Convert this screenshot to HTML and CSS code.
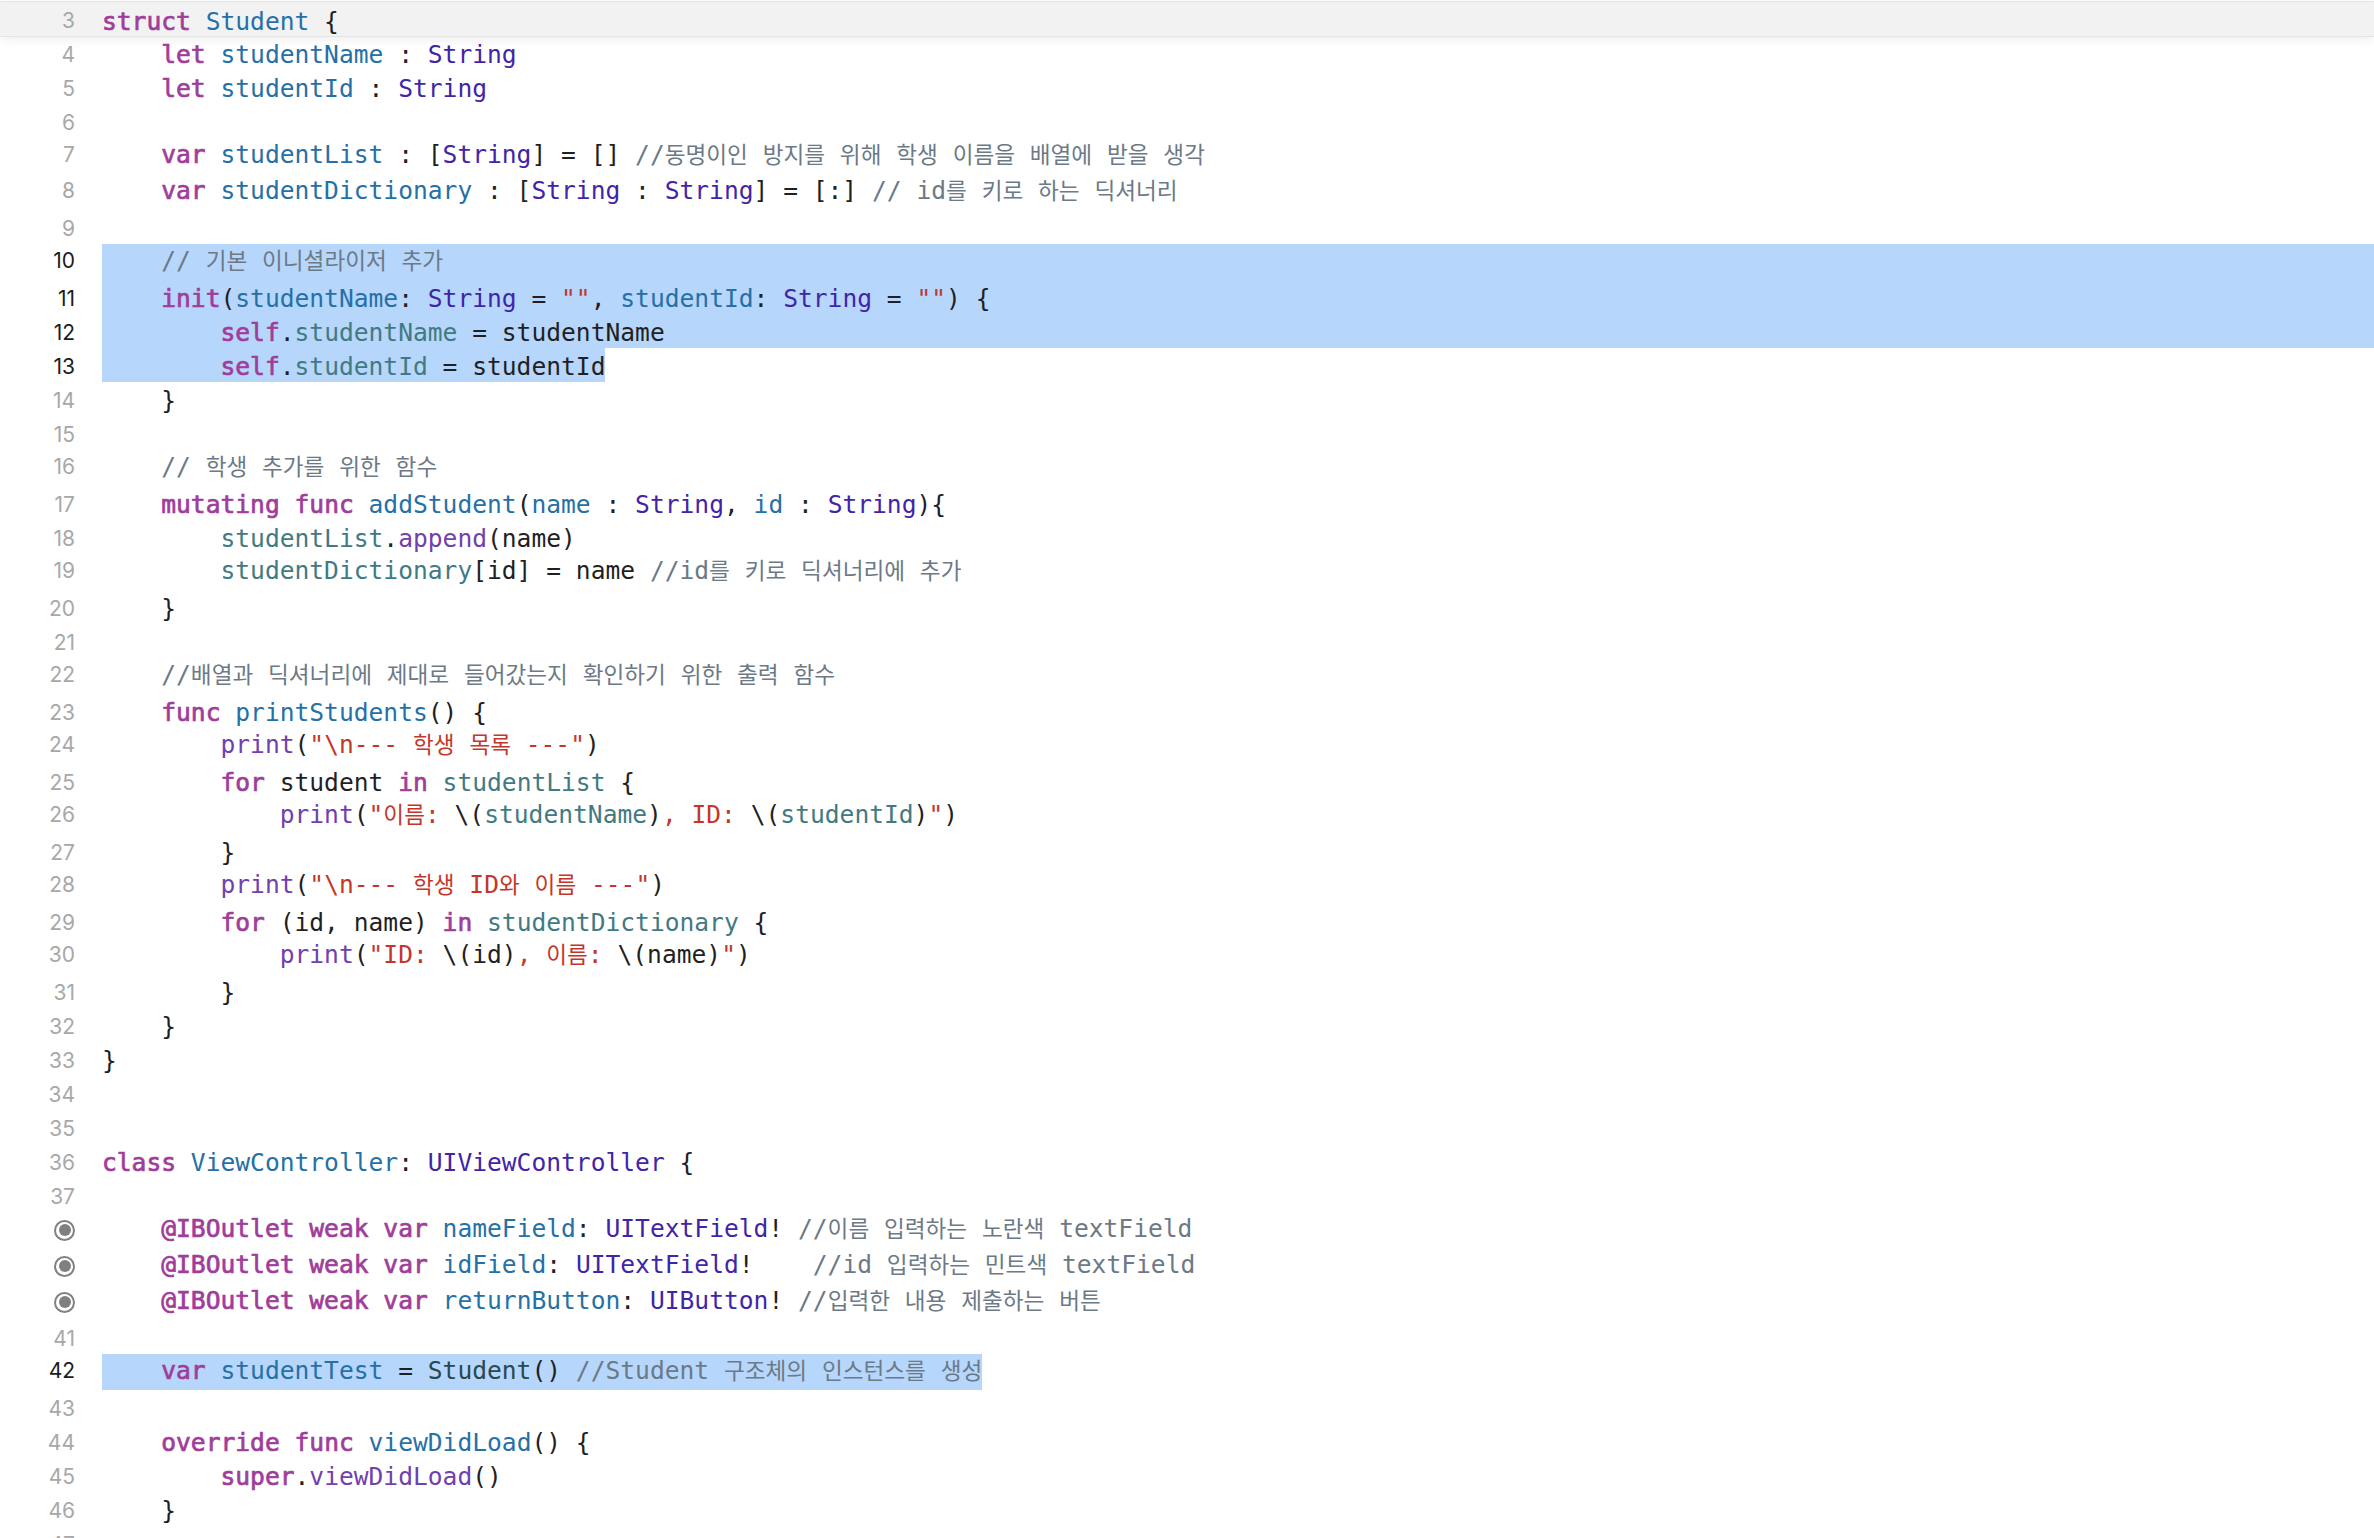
FILE: index.html
```html
<!DOCTYPE html>
<html lang="ko">
<head>
  <meta charset="UTF-8">
  <title>ViewController.swift</title>
  <link rel="stylesheet" href="styles.css">
</head>
<body>

<div class="editor">
  <div class="row sticky"><span class="num">3</span><code class="code"><b class="k">struct</b> <i class="d">Student</i> {</code></div>
  <div class="row"><span class="num">4</span><code class="code">    <b class="k">let</b> <i class="d">studentName</i> : <i class="s">String</i></code></div>
  <div class="row"><span class="num">5</span><code class="code">    <b class="k">let</b> <i class="d">studentId</i> : <i class="s">String</i></code></div>
  <div class="row"><span class="num">6</span><code class="code"></code></div>
  <div class="row tall"><span class="num">7</span><code class="code">    <b class="k">var</b> <i class="d">studentList</i> : [<i class="s">String</i>] = [] <i class="c">//<span class="ko">동명이인</span> <span class="ko">방지를</span> <span class="ko">위해</span> <span class="ko">학생</span> <span class="ko">이름을</span> <span class="ko">배열에</span> <span class="ko">받을</span> <span class="ko">생각</span></i></code></div>
  <div class="row tall"><span class="num">8</span><code class="code">    <b class="k">var</b> <i class="d">studentDictionary</i> : [<i class="s">String</i> : <i class="s">String</i>] = [:] <i class="c">// id<span class="ko">를</span> <span class="ko">키로</span> <span class="ko">하는</span> <span class="ko">딕셔너리</span></i></code></div>
  <div class="row"><span class="num">9</span><code class="code"></code></div>
  <div class="row tall cur"><span class="num">10</span><code class="code sel">    <i class="c">// <span class="ko">기본</span> <span class="ko">이니셜라이저</span> <span class="ko">추가</span></i></code></div>
  <div class="row cur"><span class="num">11</span><code class="code sel">    <b class="k">init</b>(<i class="d">studentName</i>: <i class="s">String</i> = <i class="r">""</i>, <i class="d">studentId</i>: <i class="s">String</i> = <i class="r">""</i>) {</code></div>
  <div class="row cur"><span class="num">12</span><code class="code sel">        <b class="k">self</b>.<i class="p">studentName</i> = studentName</code></div>
  <div class="row cur"><span class="num">13</span><code class="code sel part">        <b class="k">self</b>.<i class="p">studentId</i> = studentId</code></div>
  <div class="row"><span class="num">14</span><code class="code">    }</code></div>
  <div class="row"><span class="num">15</span><code class="code"></code></div>
  <div class="row tall"><span class="num">16</span><code class="code">    <i class="c">// <span class="ko">학생</span> <span class="ko">추가를</span> <span class="ko">위한</span> <span class="ko">함수</span></i></code></div>
  <div class="row"><span class="num">17</span><code class="code">    <b class="k">mutating</b> <b class="k">func</b> <i class="d">addStudent</i>(<i class="d">name</i> : <i class="s">String</i>, <i class="d">id</i> : <i class="s">String</i>){</code></div>
  <div class="row"><span class="num">18</span><code class="code">        <i class="p">studentList</i>.<i class="m">append</i>(name)</code></div>
  <div class="row tall"><span class="num">19</span><code class="code">        <i class="p">studentDictionary</i>[id] = name <i class="c">//id<span class="ko">를</span> <span class="ko">키로</span> <span class="ko">딕셔너리에</span> <span class="ko">추가</span></i></code></div>
  <div class="row"><span class="num">20</span><code class="code">    }</code></div>
  <div class="row"><span class="num">21</span><code class="code"></code></div>
  <div class="row tall"><span class="num">22</span><code class="code">    <i class="c">//<span class="ko">배열과</span> <span class="ko">딕셔너리에</span> <span class="ko">제대로</span> <span class="ko">들어갔는지</span> <span class="ko">확인하기</span> <span class="ko">위한</span> <span class="ko">출력</span> <span class="ko">함수</span></i></code></div>
  <div class="row"><span class="num">23</span><code class="code">    <b class="k">func</b> <i class="d">printStudents</i>() {</code></div>
  <div class="row tall"><span class="num">24</span><code class="code">        <i class="m">print</i>(<i class="r">"\n--- <span class="ko">학생</span> <span class="ko">목록</span> ---"</i>)</code></div>
  <div class="row"><span class="num">25</span><code class="code">        <b class="k">for</b> student <b class="k">in</b> <i class="p">studentList</i> {</code></div>
  <div class="row tall"><span class="num">26</span><code class="code">            <i class="m">print</i>(<i class="r">"<span class="ko">이름</span>: </i>\(<i class="p">studentName</i>)<i class="r">, ID: </i>\(<i class="p">studentId</i>)<i class="r">"</i>)</code></div>
  <div class="row"><span class="num">27</span><code class="code">        }</code></div>
  <div class="row tall"><span class="num">28</span><code class="code">        <i class="m">print</i>(<i class="r">"\n--- <span class="ko">학생</span> ID<span class="ko">와</span> <span class="ko">이름</span> ---"</i>)</code></div>
  <div class="row"><span class="num">29</span><code class="code">        <b class="k">for</b> (id, name) <b class="k">in</b> <i class="p">studentDictionary</i> {</code></div>
  <div class="row tall"><span class="num">30</span><code class="code">            <i class="m">print</i>(<i class="r">"ID: </i>\(id)<i class="r">, <span class="ko">이름</span>: </i>\(name)<i class="r">"</i>)</code></div>
  <div class="row"><span class="num">31</span><code class="code">        }</code></div>
  <div class="row"><span class="num">32</span><code class="code">    }</code></div>
  <div class="row"><span class="num">33</span><code class="code">}</code></div>
  <div class="row"><span class="num">34</span><code class="code"></code></div>
  <div class="row"><span class="num">35</span><code class="code"></code></div>
  <div class="row"><span class="num">36</span><code class="code"><b class="k">class</b> <i class="d">ViewController</i>: <i class="s">UIViewController</i> {</code></div>
  <div class="row"><span class="num">37</span><code class="code"></code></div>
  <div class="row tall"><span class="num"><span class="outlet"></span></span><code class="code">    <b class="k">@IBOutlet</b> <b class="k">weak</b> <b class="k">var</b> <i class="d">nameField</i>: <i class="s">UITextField</i>! <i class="c">//<span class="ko">이름</span> <span class="ko">입력하는</span> <span class="ko">노란색</span> textField</i></code></div>
  <div class="row tall"><span class="num"><span class="outlet"></span></span><code class="code">    <b class="k">@IBOutlet</b> <b class="k">weak</b> <b class="k">var</b> <i class="d">idField</i>: <i class="s">UITextField</i>!    <i class="c">//id <span class="ko">입력하는</span> <span class="ko">민트색</span> textField</i></code></div>
  <div class="row tall"><span class="num"><span class="outlet"></span></span><code class="code">    <b class="k">@IBOutlet</b> <b class="k">weak</b> <b class="k">var</b> <i class="d">returnButton</i>: <i class="s">UIButton</i>! <i class="c">//<span class="ko">입력한</span> <span class="ko">내용</span> <span class="ko">제출하는</span> <span class="ko">버튼</span></i></code></div>
  <div class="row"><span class="num">41</span><code class="code"></code></div>
  <div class="row tall cur"><span class="num">42</span><code class="code sel part">    <b class="k">var</b> <i class="d">studentTest</i> = <i class="t">Student</i>() <i class="c">//Student <span class="ko">구조체의</span> <span class="ko">인스턴스를</span> <span class="ko">생성</span></i></code></div>
  <div class="row"><span class="num">43</span><code class="code"></code></div>
  <div class="row"><span class="num">44</span><code class="code">    <b class="k">override</b> <b class="k">func</b> <i class="d">viewDidLoad</i>() {</code></div>
  <div class="row"><span class="num">45</span><code class="code">        <b class="k">super</b>.<i class="m">viewDidLoad</i>()</code></div>
  <div class="row"><span class="num">46</span><code class="code">    }</code></div>
  <div class="row"><span class="num">47</span><code class="code"></code></div>
</div>

</body>
</html>
```
FILE: styles.css
```css
body {
  margin: 0;
  background-color: #fff;
  overflow: hidden;
  height: 100vh;
}
.editor {
  padding-top: 2px;
  font-family: 'DejaVu Sans Mono', 'Noto Sans CJK KR', monospace;
  font-size: 24.6px;
  color: #1f1f24;
}
.row {
  display: grid;
  grid-template-columns: 102px 1fr;
  grid-template-rows: minmax(0, 1fr);
  height: 34px;
  line-height: 37px;
}
.row.tall {
  height: 36px;
  line-height: 32px;
}
.sticky {
  position: relative;
  z-index: 1;
  line-height: 39px;
  background-color: #f2f2f3;
  box-shadow: 0 0 0 1px #e4e4e5, 0 3px 12px rgba(0, 0, 0, 0.08);
}
.num {
  display: flex;
  justify-content: flex-end;
  align-items: center;
  padding: 2px 27px 0 0;
  font-family: Inter, 'Noto Sans', sans-serif;
  font-size: 21px;
  color: #a8a8a8;
}
.tall .num {
  padding-top: 0;
  padding-bottom: 2px;
}
.cur .num {
  color: #1c1c1c;
}
.code {
  display: block;
  font: inherit;
  white-space: pre;
}
.sel {
  background-color: #b6d6fb;
}
.part {
  justify-self: start;
}
.outlet {
  box-sizing: border-box;
  width: 21px;
  height: 21px;
  margin-top: 2px;
  border: 2px solid #808080;
  border-radius: 50%;
  display: flex;
  justify-content: center;
  align-items: center;
}
.outlet::after {
  content: '';
  width: 12px;
  height: 12px;
  border-radius: 50%;
  background-color: #808080;
}
i {
  font-style: normal;
}
.k {
  color: #a03d9a;
  font-weight: 400;
  -webkit-text-stroke: 0.7px #a03d9a;
}
.d {
  color: #2570a6;
}
.s {
  color: #4224a8;
}
.t {
  color: #28494e;
}
.p {
  color: #417a82;
}
.m {
  color: #7040ae;
}
.r {
  color: #c4362a;
}
.c {
  color: #6c7986;
}
.ko {
  font-family: 'Noto Sans CJK KR', sans-serif;
  font-size: 22.6px;
}
```
